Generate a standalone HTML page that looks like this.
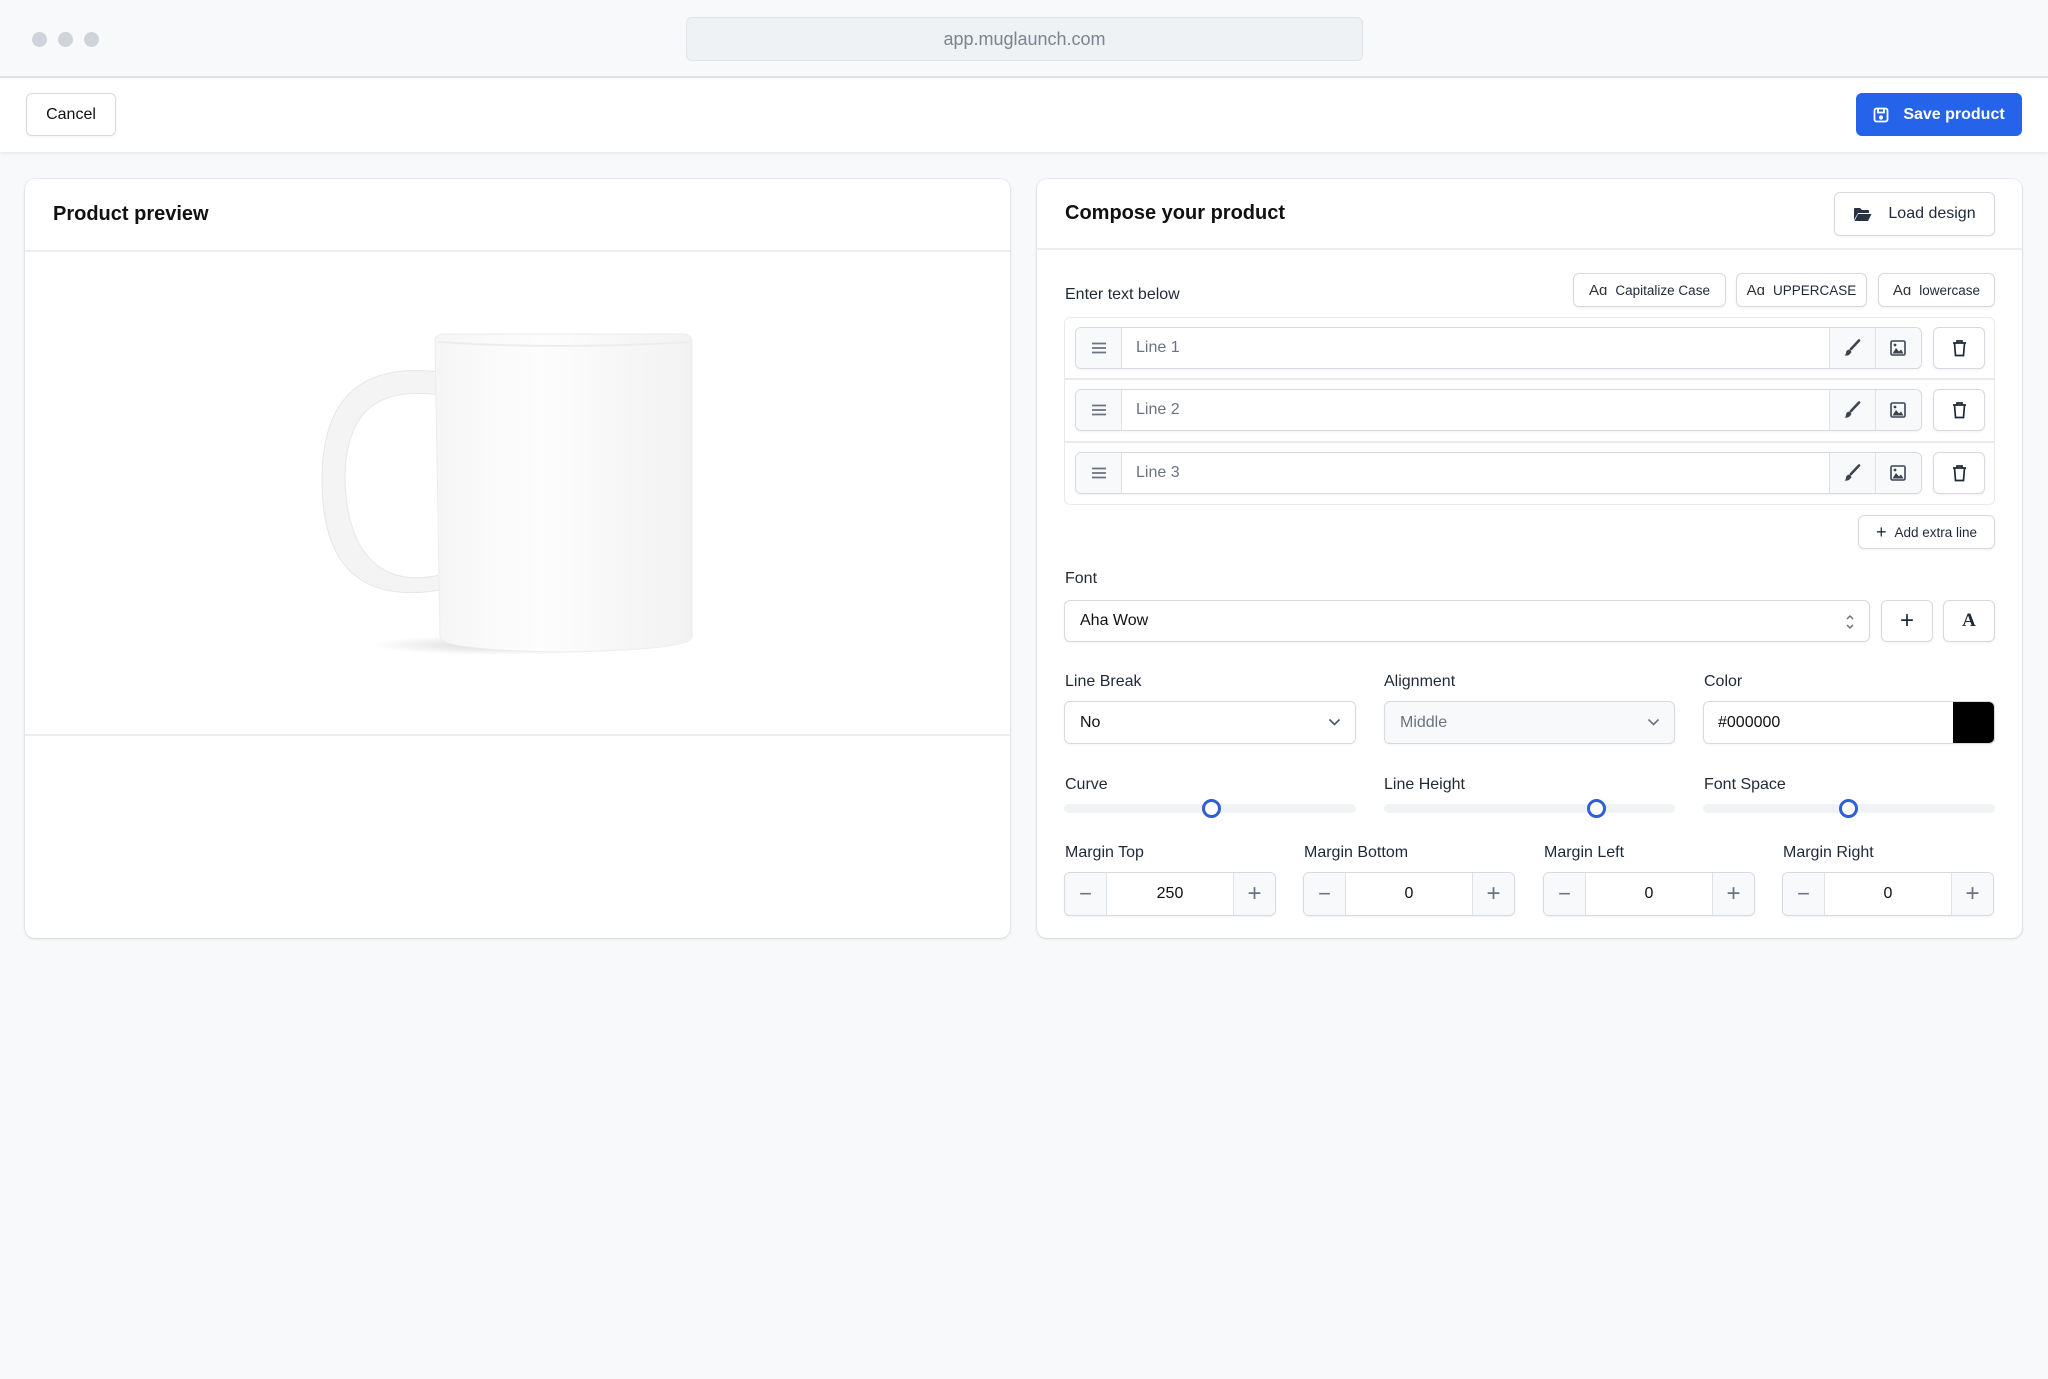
<!DOCTYPE html>
<html><head><meta charset="utf-8"><style>
*{box-sizing:border-box;margin:0;padding:0}
body{width:2048px;height:1379px;background:#f8f9fb;font-family:"Liberation Sans",sans-serif;color:#111827;position:relative;overflow:hidden}
.a{position:absolute}
.btn{position:absolute;background:#fff;border:1.5px solid #d6dae0;border-radius:6px;box-shadow:0 1px 2px rgba(0,0,0,.06);display:flex;align-items:center;justify-content:center;font-size:15px;color:#1f2937}
.card{position:absolute;background:#fff;border-radius:10px;box-shadow:0 1px 3px rgba(0,0,0,.12),0 0 0 1px #eef0f3}
.lbl{position:absolute;font-size:16px;color:#1f2937}
.inp{position:absolute;background:#fff;border:1.5px solid #d6dae0;border-radius:6px;box-shadow:0 1px 2px rgba(0,0,0,.05);font-size:16px;display:flex;align-items:center}
.gray{background:#f8f9fb}
.track{position:absolute;height:9px;background:#f1f2f4;border-radius:5px}
.thumb{position:absolute;width:19px;height:19px;border:3.5px solid #2f5fd6;border-radius:50%;background:#fff}
</style></head><body>
<div class="a" style="left:0;top:0;width:2048px;height:78px;background:#f8f9fb;border-bottom:2px solid #dde1e6"></div>
<div class="a" style="left:32px;top:32px;width:15px;height:15px;border-radius:50%;background:#cfd4da"></div>
<div class="a" style="left:58px;top:32px;width:15px;height:15px;border-radius:50%;background:#cfd4da"></div>
<div class="a" style="left:84px;top:32px;width:15px;height:15px;border-radius:50%;background:#cfd4da"></div>
<div class="a" style="left:686px;top:17px;width:677px;height:44px;background:#eff2f5;border:1.5px solid #e0e4e9;border-radius:6px;display:flex;align-items:center;justify-content:center;font-size:18px;color:#7b838d">app.muglaunch.com</div>
<div class="a" style="left:0;top:79px;width:2048px;height:73px;background:#fff;box-shadow:0 2px 3px rgba(0,0,0,.06)"></div>
<div class="btn" style="left:26px;top:93px;width:90px;height:43px;font-size:16px;color:#111">Cancel</div>
<div class="a" style="left:1856px;top:93px;width:166px;height:43px;background:#2563eb;border-radius:6px;display:flex;align-items:center;justify-content:center;gap:14px;color:#fff;font-size:16px;font-weight:bold">
<svg width="16" height="16" viewBox="0 0 16 16" fill="none" stroke="#fff" stroke-width="1.8"><rect x="1.5" y="1.5" width="13" height="13" rx="2"/><path d="M5 1.5v4h6v-4"/><circle cx="8" cy="10.5" r="1.2" fill="#fff"/></svg>Save product</div>
<div class="card" style="left:25px;top:179px;width:985px;height:759px">
<div class="a" style="left:28px;top:24px;font-size:20px;font-weight:bold;color:#111">Product preview</div>
<div class="a" style="left:0;top:71px;width:985px;height:1.5px;background:#eceef1"></div>
<div class="a" style="left:0;top:555px;width:985px;height:1.5px;background:#eceef1"></div>
</div>
<svg class="a" style="left:300px;top:320px" width="420" height="350" viewBox="300 320 420 350">
<defs><linearGradient id="g" x1="0" x2="1"><stop offset="0" stop-color="#f6f6f6"/><stop offset=".4" stop-color="#fdfdfd"/><stop offset="1" stop-color="#f2f2f2"/></linearGradient>
<radialGradient id="sh"><stop offset="0" stop-color="#d8d8d8"/><stop offset="1" stop-color="#d8d8d8" stop-opacity="0"/></radialGradient></defs>
<ellipse cx="500" cy="645" rx="130" ry="10" fill="url(#sh)"/>
<path d="M440 372 C380 365 322 380 322 480 C322 585 380 600 440 590 L440 575 C395 585 348 570 345 480 C345 400 390 388 440 395 Z" fill="#f4f4f4" stroke="#e6e6e6"/>
<path d="M435 340 Q435 334 445 334 L682 334 Q692 334 692 342 L692 637 Q692 650 560 652 Q440 650 440 637 Z" fill="url(#g)" stroke="#ececec"/>
<path d="M438 342 Q560 350 690 342" stroke="#ededed" fill="none" stroke-width="2"/>
</svg>
<div class="card" style="left:1037px;top:179px;width:985px;height:759px"></div>
<div class="a" style="left:1065px;top:202px;font-size:20px;font-weight:bold;color:#111">Compose your product</div>
<div class="a" style="left:1037px;top:248px;width:985px;height:1.5px;background:#eceef1"></div>
<div class="btn" style="left:1834px;top:192px;width:161px;height:44px;font-size:16px;gap:16px">
<svg width="19" height="15" viewBox="0 0 19 15"><path d="M1 2 Q1 1 2 1 L7 1 L9 3 L15 3 Q16 3 16 4 L16 6 L5 6 L1 13 Z" fill="#273244"/><path d="M5 7 L18.5 7 L15 14 L1.5 14 Z" fill="#273244"/></svg>Load design</div>
<div class="lbl" style="left:1065px;top:286px">Enter text below</div>
<div class="btn" style="left:1573px;top:273px;width:153px;height:34px;font-size:13.5px;gap:8px"><span style="font-size:15px;color:#333">Aɑ</span><span>Capitalize Case</span></div>
<div class="btn" style="left:1736px;top:273px;width:131px;height:34px;font-size:13.5px;gap:8px"><span style="font-size:15px;color:#333">Aɑ</span><span>UPPERCASE</span></div>
<div class="btn" style="left:1878px;top:273px;width:117px;height:34px;font-size:13.5px;gap:8px"><span style="font-size:15px;color:#333">Aɑ</span><span>lowercase</span></div>
<div class="a" style="left:1064px;top:317px;width:931px;height:188px;border:1.5px solid #e8eaee;border-radius:6px"></div>
<div class="a" style="left:1064px;top:378px;width:931px;height:1.5px;background:#e8eaee"></div>
<div class="a" style="left:1064px;top:441px;width:931px;height:1.5px;background:#e8eaee"></div>
<div id="rows"></div>
<script>
var ys=[327,389,452],h='';
for(var i=0;i<3;i++){var y=ys[i];
h+='<div class="inp" style="left:1075px;top:'+y+'px;width:847px;height:42px;overflow:hidden;color:#6b7280">'+
'<div class="gray" style="position:absolute;left:0;top:0;width:46px;height:100%;display:flex;align-items:center;justify-content:center;border-right:1.5px solid #dfe2e6"><svg width="16" height="14"><path d="M1 2.5h14M1 7h14M1 11.5h14" stroke="#6b7280" stroke-width="1.7"/></svg></div>'+
'<span style="position:absolute;left:60px">Line '+(i+1)+'</span>'+
'<div class="gray" style="position:absolute;right:0;top:0;width:92px;height:100%;border-left:1.5px solid #dfe2e6;display:flex"><div style="width:46px;display:flex;align-items:center;justify-content:center;border-right:1.5px solid #dfe2e6"><svg width="18" height="18" viewBox="0 0 18 18"><path d="M16 1.5 L8 10" stroke="#3c4452" stroke-width="2.6" stroke-linecap="round"/><path d="M7 10.5 Q3 10.5 3 14 Q3 15.5 1.5 16.5 Q6 17.5 8.5 13 Z" fill="#3c4452"/></svg></div><div style="width:46px;display:flex;align-items:center;justify-content:center"><svg width="16" height="16" viewBox="0 0 16 16"><rect x="1" y="1" width="14" height="14" rx="1.5" fill="none" stroke="#3c4452" stroke-width="1.6"/><path d="M2.5 13.5 L6 8 L9 11.5 L11 9.5 L13.5 13.5 Z" fill="#3c4452"/><circle cx="5" cy="5" r="1.4" fill="#3c4452"/></svg></div></div></div>'+
'<div class="btn" style="left:1933px;top:'+y+'px;width:52px;height:42px"><svg width="15" height="18" viewBox="0 0 15 18" fill="none" stroke="#1f2937" stroke-width="1.7"><path d="M1 4h13M5 4V2h5v2M2.5 4l1 12.5h8l1-12.5"/></svg></div>';}
document.getElementById('rows').innerHTML=h;
</script>
<div class="btn" style="left:1858px;top:515px;width:137px;height:34px;font-size:13.5px;gap:8px"><span style="font-size:18px">+</span>Add extra line</div>
<div class="lbl" style="left:1065px;top:570px">Font</div>
<div class="inp" style="left:1064px;top:600px;width:806px;height:42px;padding-left:15px;color:#111">Aha Wow
<svg style="position:absolute;right:14px;top:12px" width="10" height="18" viewBox="0 0 10 18" fill="none" stroke="#6b7280" stroke-width="1.5"><path d="M2 6l3-3 3 3M2 12l3 3 3-3"/></svg></div>
<div class="btn" style="left:1881px;top:600px;width:52px;height:42px;font-size:24px">+</div>
<div class="btn" style="left:1943px;top:600px;width:52px;height:42px;font-size:19px;font-family:'Liberation Serif',serif;font-weight:bold">A</div>
<div class="lbl" style="left:1065px;top:673px">Line Break</div>
<div class="lbl" style="left:1384px;top:673px">Alignment</div>
<div class="lbl" style="left:1704px;top:673px">Color</div>
<div class="inp" style="left:1064px;top:701px;width:292px;height:43px;padding-left:15px;color:#111">No<svg style="position:absolute;right:14px;top:16px" width="13" height="9" fill="none" stroke="#4b5563" stroke-width="1.6"><path d="M1.5 1.5l5 5 5-5"/></svg></div>
<div class="inp gray" style="left:1384px;top:701px;width:291px;height:43px;padding-left:15px;color:#6b7280">Middle<svg style="position:absolute;right:14px;top:16px" width="13" height="9" fill="none" stroke="#6b7280" stroke-width="1.6"><path d="M1.5 1.5l5 5 5-5"/></svg></div>
<div class="inp" style="left:1703px;top:701px;width:292px;height:43px;padding-left:14px;color:#111;overflow:hidden">#000000<div style="position:absolute;right:0;top:0;width:41px;height:100%;background:#000"></div></div>
<div class="lbl" style="left:1065px;top:776px">Curve</div>
<div class="lbl" style="left:1384px;top:776px">Line Height</div>
<div class="lbl" style="left:1704px;top:776px">Font Space</div>
<div class="track" style="left:1064px;top:804px;width:292px"></div>
<div class="track" style="left:1384px;top:804px;width:291px"></div>
<div class="track" style="left:1703px;top:804px;width:292px"></div>
<div class="thumb" style="left:1202px;top:799px"></div>
<div class="thumb" style="left:1587px;top:799px"></div>
<div class="thumb" style="left:1839px;top:799px"></div>
<div id="m"></div>
<script>
var xs=[1064,1303,1543,1782],ls=['Margin Top','Margin Bottom','Margin Left','Margin Right'],vs=['250','0','0','0'],s='';
for(var i=0;i<4;i++){var x=xs[i];
s+='<div class="lbl" style="left:'+(x+1)+'px;top:844px">'+ls[i]+'</div>'+
'<div class="inp" style="left:'+x+'px;top:872px;width:212px;height:44px;overflow:hidden;color:#111">'+
'<div class="gray" style="position:absolute;left:0;top:0;width:42px;height:100%;border-right:1.5px solid #dfe2e6;display:flex;align-items:center;justify-content:center;color:#6b7280;font-size:22px">−</div>'+
'<div style="position:absolute;left:42px;right:42px;text-align:center">'+vs[i]+'</div>'+
'<div class="gray" style="position:absolute;right:0;top:0;width:42px;height:100%;border-left:1.5px solid #dfe2e6;display:flex;align-items:center;justify-content:center;color:#6b7280;font-size:24px">+</div></div>';}
document.getElementById('m').innerHTML=s;
</script>
</body></html>
